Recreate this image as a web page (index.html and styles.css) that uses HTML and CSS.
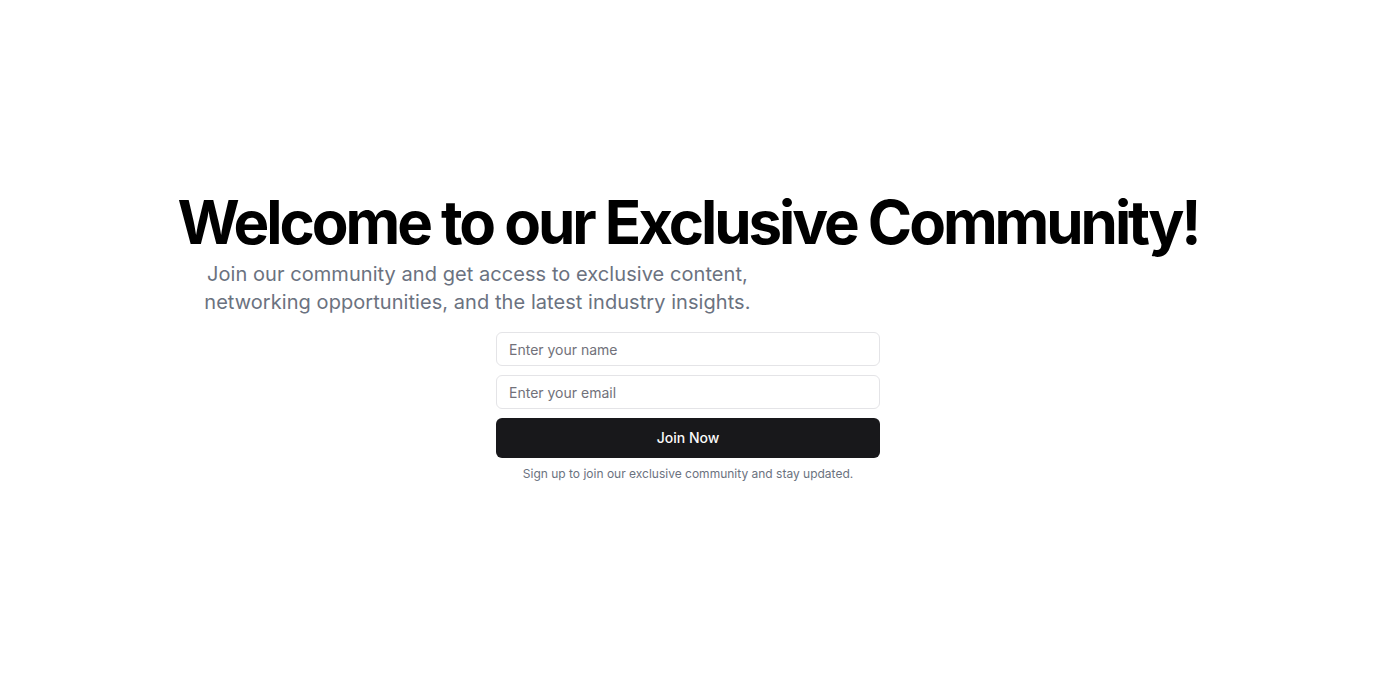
FILE: index.html
```html
<!DOCTYPE html>
<html lang="en">
<head>
<meta charset="utf-8">
<title>Exclusive Community</title>
<link rel="stylesheet" href="styles.css">
</head>
<body>
<main class="page">
  <section class="hero">
    <div class="intro">
      <h1 class="title">Welcome to our Exclusive Community!</h1>
      <p class="lead">Join our community and get access to exclusive content, networking opportunities, and the latest industry insights.</p>
    </div>
    <div class="signup">
      <form class="form">
        <input class="field" type="text" placeholder="Enter your name">
        <input class="field" type="email" placeholder="Enter your email">
        <button class="btn" type="button">Join Now</button>
      </form>
      <p class="note">Sign up to join our exclusive community and stay updated.</p>
    </div>
  </section>
</main>
</body>
</html>
```

FILE: styles.css
```css
* { box-sizing: border-box; }
html, body { margin: 0; padding: 0; }
body {
  font-family: Inter, "Liberation Sans", sans-serif;
  background: #ffffff;
  color: #09090b;
}
.page {
  min-height: 674px;
  display: flex;
  align-items: center;
  justify-content: center;
}
.hero {
  display: flex;
  flex-direction: column;
  align-items: center;
  gap: 16px;
  text-align: center;
}
.intro {
  display: flex;
  flex-direction: column;
  gap: 8px;
}
.title {
  margin: 0;
  font-size: 60px;
  line-height: 60px;
  font-weight: 700;
  letter-spacing: -0.051em;
  color: #000;
}
.lead {
  margin: 0;
  max-width: 600px;
  font-size: 20px;
  line-height: 28px;
  letter-spacing: 0.06px;
  color: #6b7280;
}
.signup {
  width: 384px;
  display: flex;
  flex-direction: column;
  gap: 8px;
}
.form {
  display: flex;
  flex-direction: column;
  gap: 9px;
}
.field {
  height: 34px;
  width: 100%;
  border: 1px solid #e4e4e7;
  border-radius: 6px;
  padding: 0 12px;
  font-family: inherit;
  font-size: 14px;
  color: #09090b;
  background: #fff;
  outline: none;
}
.field::placeholder { color: #71717a; }
.btn {
  height: 40px;
  width: 100%;
  border: 0;
  border-radius: 6px;
  padding: 0 16px 1px;
  background: #18181b;
  color: #fafafa;
  font-family: inherit;
  font-size: 14px;
  font-weight: 500;
}
.note {
  margin: 0;
  font-size: 12px;
  line-height: 16px;
  color: #6b7280;
}
```
